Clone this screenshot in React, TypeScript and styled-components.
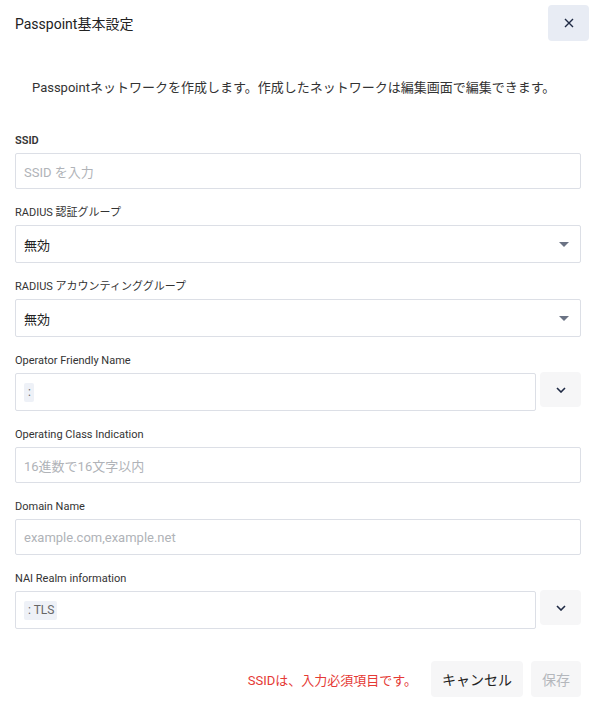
import styled, {createGlobalStyle} from 'styled-components'

const GlobalStyle = createGlobalStyle`
  html, body {
    margin: 0;
    padding: 0;
    background: #ffffff;
  }
  body {
    font-family: Roboto, "Noto Sans CJK JP", sans-serif;
    color: #222;
  }
`

const Dialog = styled.div`
  width: 596px;
  padding: 0 15px;
  box-sizing: border-box;
`

const Header = styled.div`
  display: flex;
  justify-content: space-between;
  align-items: center;
  height: 46px;
`

const Title = styled.h1`
  margin: 0;
  font-size: 14px;
  font-weight: 400;
  color: #222;
`

const CloseButton = styled.button`
  width: 41px;
  height: 36px;
  margin-right: -8px;
  border: none;
  border-radius: 4px;
  background: #e8ecf4;
  display: flex;
  align-items: center;
  justify-content: center;
  padding: 0;
`

const Description = styled.p`
  margin: 32px 0 0 17px;
  font-size: 13px;
  color: #333;
  line-height: 20px;
`

const Form = styled.div`
  margin-top: 36px;
  display: flex;
  flex-direction: column;
  gap: 17px;
`

const Field = styled.div`
  display: flex;
  flex-direction: column;
  gap: 5px;
`

const Label = styled.label<{ $bold?: boolean }>`
  font-size: 11px;
  line-height: 14px;
  color: #333;
  font-weight: ${p => (p.$bold ? 600 : 400)};
`

const Box = styled.div<{ $h?: number }>`
  height: ${p => p.$h ?? 36}px;
  flex: none;
  border: 1px solid #dcdfe6;
  border-radius: 2px;
  box-sizing: border-box;
  display: flex;
  align-items: center;
  padding: 0 9px 0 8px;
  font-size: 13px;
  color: #222;
`

const WideBox = styled(Box)`
  flex: 1;
`

const Placeholder = styled.span`
  color: #b0b3b8;
`

const Caret = styled.span`
  margin-left: auto;
  margin-right: 2px;
  width: 0;
  height: 0;
  border-left: 5px solid transparent;
  border-right: 5px solid transparent;
  border-top: 5px solid #6b7384;
`

const Row = styled.div`
  display: flex;
  align-items: flex-start;
  gap: 4px;
`

const Tag = styled.span`
  background: #eef1f7;
  color: #666;
  font-size: 12px;
  border-radius: 2px;
  padding: 0 3px 0 4px;
  height: 19px;
  line-height: 19px;
`

const SideButton = styled.button`
  width: 41px;
  height: 35px;
  margin-top: -1px;
  border: none;
  border-radius: 4px;
  background: #f6f6f7;
  display: flex;
  align-items: center;
  justify-content: center;
  padding: 0;
`

const Footer = styled.div`
  margin-top: 32px;
  display: flex;
  justify-content: flex-end;
  align-items: center;
  gap: 8px;
`

const ErrorText = styled.span`
  color: #e53935;
  font-size: 13px;
  margin-right: 6px;
`

const FooterButton = styled.button<{ $disabled?: boolean }>`
  height: 36px;
  border: none;
  border-radius: 4px;
  background: #f6f6f7;
  font-family: inherit;
  font-size: 14px;
  padding: 0 11px;
  color: ${p => (p.$disabled ? '#b4b7bc' : '#222')};
`

const Chevron = () => (
  <svg width="10" height="6" viewBox="0 0 10 6">
    <path d="M1 1l4 4 4-4" fill="none" stroke="#1f2a44" strokeWidth="1.6" />
  </svg>
)

const App = () => {
  return (
    <Dialog>
      <GlobalStyle />
      <Header>
        <Title>Passpoint基本設定</Title>
        <CloseButton>
          <svg width="10" height="10" viewBox="0 0 10 10">
            <path d="M1 1l8 8M9 1l-8 8" stroke="#1f2a44" strokeWidth="1.4" />
          </svg>
        </CloseButton>
      </Header>
      <Description>
        Passpointネットワークを作成します。作成したネットワークは編集画面で編集できます。
      </Description>
      <Form>
        <Field>
          <Label $bold>SSID</Label>
          <Box>
            <Placeholder>SSID を入力</Placeholder>
          </Box>
        </Field>
        <Field>
          <Label>RADIUS 認証グループ</Label>
          <Box $h={38}>
            無効
            <Caret />
          </Box>
        </Field>
        <Field>
          <Label>RADIUS アカウンティンググループ</Label>
          <Box $h={38}>
            無効
            <Caret />
          </Box>
        </Field>
        <Field>
          <Label>Operator Friendly Name</Label>
          <Row>
            <WideBox $h={38}>
              <Tag>:</Tag>
            </WideBox>
            <SideButton>
              <Chevron />
            </SideButton>
          </Row>
        </Field>
        <Field>
          <Label>Operating Class Indication</Label>
          <Box>
            <Placeholder>16進数で16文字以内</Placeholder>
          </Box>
        </Field>
        <Field>
          <Label>Domain Name</Label>
          <Box>
            <Placeholder>example.com,example.net</Placeholder>
          </Box>
        </Field>
        <Field>
          <Label>NAI Realm information</Label>
          <Row>
            <WideBox $h={38}>
              <Tag>: TLS</Tag>
            </WideBox>
            <SideButton>
              <Chevron />
            </SideButton>
          </Row>
        </Field>
      </Form>
      <Footer>
        <ErrorText>SSIDは、入力必須項目です。</ErrorText>
        <FooterButton>キャンセル</FooterButton>
        <FooterButton $disabled>保存</FooterButton>
      </Footer>
    </Dialog>
  )
}

export default App
